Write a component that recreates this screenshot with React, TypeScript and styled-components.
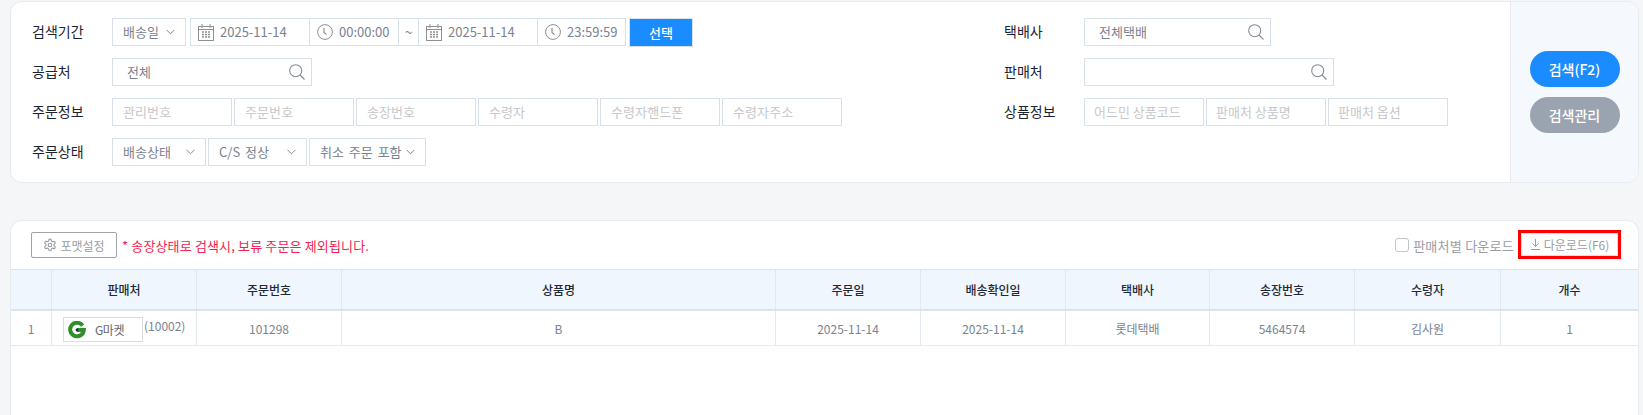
import React from "react";
import styled, { createGlobalStyle } from "styled-components";

const Global = createGlobalStyle`
  html, body { margin: 0; padding: 0; height: 100%; overflow: hidden; background: #f4f6f8; }
  body { font-family: "Noto Sans CJK KR", "Noto Sans", sans-serif; font-size: 13px; }
  * { box-sizing: border-box; }
`;
const Page = styled.div`
  width: 1643px; height: 415px; padding: 1px 4px 0 10px;
  display: flex; flex-direction: column; gap: 37px; overflow: hidden;
`;
const SearchPanel = styled.section`
  display: flex; height: 182px; flex: none; background: #fff;
  border: 1px solid #e6ebf0; border-radius: 12px; overflow: hidden;
`;
const FormColumn = styled.div<{ $w: number; $pl: number }>`
  flex: none; width: ${p => p.$w}px; padding: 16px 0 0 ${p => p.$pl}px;
  display: flex; flex-direction: column; gap: 12px;
`;
const Row = styled.div`display: flex; align-items: center; height: 28px;`;
const Label = styled.div`
  flex: none; width: 80px; font-size: 14px; color: #1c2433; margin-top: -3px; line-height: 20px;
`;
const Controls = styled.div<{ $gap?: number }>`display: flex; gap: ${p => p.$gap ?? 2}px; align-items: center;`;
const Box = styled.div<{ $w: number }>`
  width: ${p => p.$w}px; height: 28px; flex: none; background: #fff; border: 1px solid #d6e1ec;
  display: flex; align-items: center; color: #7a8291; white-space: nowrap; line-height: 26px;
`;
const SelectBox = styled(Box)<{ $pr?: number }>`
  justify-content: space-between; padding: 0 ${p => p.$pr ?? 10}px 0 10px; word-spacing: 2px;
`;
const SearchBox = styled(Box)`justify-content: space-between; padding: 0 5px 0 14px;`;
const EmptySearchBox = styled(SearchBox)`justify-content: flex-end;`;
const Placeholder = styled(Box)`padding-left: 10px; color: #c6c8cc; letter-spacing: 0.1px;`;
const PlaceholderTight = styled(Placeholder)`padding-left: 9px; letter-spacing: 0;`;
const DateGroup = styled.div`
  display: flex; height: 28px; margin-left: 2px; background: #fff; border: 1px solid #d6e1ec; color: #7a8291;
`;
const DateCell = styled.div<{ $w: number }>`
  width: ${p => p.$w}px; display: flex; align-items: center; gap: 6px; padding-left: 7px;
  border-right: 1px solid #d6e1ec; line-height: 26px; white-space: nowrap;
  &:last-child { border-right: 0; }
`;
const Tilde = styled.div`
  width: 20px; text-align: center; border-right: 1px solid #d6e1ec; line-height: 26px;
`;
const SelectButton = styled.button`
  width: 64px; height: 29px; margin-left: 1px; background: #1a8cff; color: #fff; border: 1px solid #d6e1ec;
  font: 500 13px "Noto Sans CJK KR", sans-serif; padding: 0;
`;
const SidePanel = styled.div`
  flex: 1; background: #f5f9fd; border-left: 1px solid #e6ebf0;
  display: flex; flex-direction: column; align-items: center; gap: 10px; padding-top: 49px;
`;
const Pill = styled.button<{ $bg: string }>`
  width: 90px; height: 36px; border: 0; border-radius: 18px; background: ${p => p.$bg}; color: #fff;
  font: 500 14px "Noto Sans CJK KR", sans-serif; padding: 0;
`;
const TablePanel = styled.section`
  flex: 1; background: #fff; border: 1px solid #e6ebf0; border-bottom: 0; border-radius: 12px 12px 0 0;
  display: flex; flex-direction: column;
`;
const Toolbar = styled.div`
  height: 48px; flex: none; display: flex; align-items: center; justify-content: space-between; padding: 0 17px 0 20px;
`;
const ToolGroup = styled.div`display: flex; align-items: center;`;
const FormatButton = styled.button`
  width: 86px; height: 26px; background: #fff; border: 1px solid #a3a3a3; border-radius: 2px; color: #9a9da3;
  display: flex; align-items: center; justify-content: center; gap: 3px; font: 12px "Noto Sans CJK KR", sans-serif; padding: 0;
`;
const Warning = styled.span`color: #f5234f; font-size: 13px; margin-left: 5px; letter-spacing: 0.15px;`;
const Check = styled.span`
  width: 14px; height: 14px; border: 1px solid #c4c6ca; border-radius: 3px; background: #fff; margin-right: 4px;
`;
const CheckLabel = styled.span`color: #9a9da3; font-size: 13px; letter-spacing: 0.25px; margin-right: 4px;`;
const DownloadButton = styled.button`
  width: 103px; height: 29px; margin-top: -2px; background: #fff; border: 3px solid #f00; color: #9a9da3; padding: 0;
  box-shadow: inset 0 0 0 1px #dfe3e8;
  display: flex; align-items: center; justify-content: center; gap: 3px; font: 12px "Noto Sans CJK KR", sans-serif;
`;
const Grid = styled.div<{ $h: number; $head?: boolean }>`
  display: grid; grid-template-columns: 41px 145px 145px 434px 145px 145px 144px 145px 146px 137px;
  height: ${p => p.$h}px; flex: none;
  background: ${p => p.$head ? "#eff6fe" : "#fff"};
  border-top: ${p => p.$head ? "1px solid #dbe4ee" : "0"};
  border-bottom: ${p => p.$head ? "2px solid #dbe4ee" : "1px solid #e3eaf2"};
`;
const HeadCell = styled.div`
  display: flex; align-items: center; justify-content: center; border-right: 1px solid #e0e8f1;
  font-size: 12px; font-weight: 500; color: #1f2937;
  &:last-child { border-right: 0; }
`;
const Cell = styled(HeadCell)`font-weight: 400; color: #7a8291; border-color: #e3eaf2;`;
const SellerCell = styled(Cell)`justify-content: flex-start; padding-left: 11px; align-items: flex-start; padding-top: 6px;`;
const MarketBadge = styled.span`
  width: 80px; height: 25px; border: 1px solid #dcdcdc; display: flex; align-items: center; color: #666;
  font-size: 12px; padding-left: 4px; gap: 9px; letter-spacing: -0.4px;
`;
const SellerCode = styled.span`margin-left: 1px; line-height: 18px; font-family: "Noto Sans CJK KR", sans-serif;`;

const Chevron = () => (
  <svg width="9" height="6" viewBox="0 0 9 6" fill="none" stroke="#858b96" strokeWidth="1">
    <path d="M.5.8l4 4 4-4" />
  </svg>
);
const Magnifier = () => (
  <svg width="18" height="18" viewBox="0 0 18 18" fill="none" stroke="#858b96" strokeWidth="1.1">
    <circle cx="7.7" cy="7.7" r="6" /><path d="M12 12l4.5 4.5" />
  </svg>
);
const Calendar = () => (
  <svg width="16" height="17" viewBox="0 0 16 17" fill="none" stroke="#8f8f8f" strokeWidth="1" style={{ flex: "none" }}>
    <rect x=".5" y="2.5" width="15" height="14" /><path d="M4 0v4M12 0v4M.5 5.5h15" />
    <path d="M4 8h2M7 8h2M10 8h2M4 10.5h2M7 10.5h2M10 10.5h2M4 13h2M7 13h2M10 13h2" strokeWidth="1.3" />
  </svg>
);
const Clock = () => (
  <svg width="16" height="16" viewBox="0 0 16 16" fill="none" stroke="#8f8f8f" strokeWidth="1" style={{ flex: "none" }}>
    <circle cx="8" cy="8" r="7.4" /><path d="M7 4v4.5l2.5 2" strokeWidth="1.2" />
  </svg>
);
const Gear = () => (
  <svg width="14" height="14" viewBox="0 0 24 24" fill="none" stroke="#9a9da3" strokeWidth="2">
    <path d="M12.2 2h-.4a2 2 0 0 0-2 2v.2a2 2 0 0 1-1 1.7l-.4.3a2 2 0 0 1-2 0l-.2-.1a2 2 0 0 0-2.7.7l-.2.4a2 2 0 0 0 .7 2.7l.2.1a2 2 0 0 1 1 1.7v.5a2 2 0 0 1-1 1.7l-.2.1a2 2 0 0 0-.7 2.7l.2.4a2 2 0 0 0 2.7.7l.2-.1a2 2 0 0 1 2 0l.4.3a2 2 0 0 1 1 1.7v.2a2 2 0 0 0 2 2h.4a2 2 0 0 0 2-2v-.2a2 2 0 0 1 1-1.7l.4-.3a2 2 0 0 1 2 0l.2.1a2 2 0 0 0 2.7-.7l.2-.4a2 2 0 0 0-.7-2.7l-.2-.1a2 2 0 0 1-1-1.7v-.5a2 2 0 0 1 1-1.7l.2-.1a2 2 0 0 0 .7-2.7l-.2-.4a2 2 0 0 0-2.7-.7l-.2.1a2 2 0 0 1-2 0l-.4-.3a2 2 0 0 1-1-1.7V4a2 2 0 0 0-2-2z" />
    <circle cx="12" cy="12" r="3" />
  </svg>
);
const DownloadIcon = () => (
  <svg width="11" height="11" viewBox="0 0 11 11" fill="none" stroke="#9a9da3" strokeWidth="1">
    <path d="M5.5 0v7M2.5 4.5l3 3 3-3M1 10.5h9" />
  </svg>
);
const GLogo = () => (
  <svg width="18" height="18" viewBox="0 0 18 18" style={{ flex: "none" }}>
    <path d="M14.6 4.6A6.8 6.8 0 1 0 15.8 9H9" fill="none" stroke="#2f8f2b" strokeWidth="4" />
    <circle cx="9" cy="9" r="1.4" fill="#13235f" />
  </svg>
);

const DateTime = ({ date, time }: { date: string; time: string }) => (
  <>
    <DateCell $w={119}><Calendar />{date}</DateCell>
    <DateCell $w={89}><Clock />{time}</DateCell>
  </>
);

const headers = ["", "판매처", "주문번호", "상품명", "주문일", "배송확인일", "택배사", "송장번호", "수령자", "개수"];
const values = ["B", "2025-11-14", "2025-11-14", "롯데택배", "5464574", "김사원", "1"];

export default function App() {
  return (
    <Page>
      <Global />
      <SearchPanel>
        <FormColumn $w={993} $pl={21}>
          <Row>
            <Label>검색기간</Label>
            <Controls>
              <SelectBox $w={74}>배송일<Chevron /></SelectBox>
              <DateGroup>
                <DateTime date="2025-11-14" time="00:00:00" />
                <Tilde>~</Tilde>
                <DateCell $w={119}><Calendar />2025-11-14</DateCell>
                <DateCell $w={87}><Clock />23:59:59</DateCell>
              </DateGroup>
              <SelectButton>선택</SelectButton>
            </Controls>
          </Row>
          <Row><Label>공급처</Label><SearchBox $w={200}>전체<Magnifier /></SearchBox></Row>
          <Row>
            <Label>주문정보</Label>
            <Controls>
              {["관리번호", "주문번호", "송장번호", "수령자", "수령자핸드폰", "수령자주소"].map(t => (
                <Placeholder key={t} $w={120}>{t}</Placeholder>
              ))}
            </Controls>
          </Row>
          <Row>
            <Label>주문상태</Label>
            <Controls>
              <SelectBox $w={94}>배송상태<Chevron /></SelectBox>
              <SelectBox $w={99}>C/S 정상<Chevron /></SelectBox>
              <SelectBox $w={117}>취소 주문 포함<Chevron /></SelectBox>
            </Controls>
          </Row>
        </FormColumn>
        <FormColumn $w={506} $pl={0}>
          <Row><Label>택배사</Label><SearchBox $w={187}>전체택배<Magnifier /></SearchBox></Row>
          <Row><Label>판매처</Label><EmptySearchBox $w={250}><Magnifier /></EmptySearchBox></Row>
          <Row>
            <Label>상품정보</Label>
            <Controls>
              {["어드민 상품코드", "판매처 상품명", "판매처 옵션"].map(t => (
                <PlaceholderTight key={t} $w={120}>{t}</PlaceholderTight>
              ))}
            </Controls>
          </Row>
        </FormColumn>
        <SidePanel>
          <Pill $bg="#1a8cff">검색(F2)</Pill>
          <Pill $bg="#9aa3b0">검색관리</Pill>
        </SidePanel>
      </SearchPanel>
      <TablePanel>
        <Toolbar>
          <ToolGroup>
            <FormatButton><Gear />포맷설정</FormatButton>
            <Warning>* 송장상태로 검색시, 보류 주문은 제외됩니다.</Warning>
          </ToolGroup>
          <ToolGroup>
            <Check />
            <CheckLabel>판매처별 다운로드</CheckLabel>
            <DownloadButton><DownloadIcon />다운로드(F6)</DownloadButton>
          </ToolGroup>
        </Toolbar>
        <Grid $h={42} $head>
          {headers.map((h, i) => <HeadCell key={i}>{h}</HeadCell>)}
        </Grid>
        <Grid $h={35}>
          <Cell>1</Cell>
          <SellerCell>
            <MarketBadge><GLogo />G마켓</MarketBadge>
            <SellerCode>(10002)</SellerCode>
          </SellerCell>
          <Cell>101298</Cell>
          {values.map((v, i) => <Cell key={i}>{v}</Cell>)}
        </Grid>
      </TablePanel>
    </Page>
  );
}
